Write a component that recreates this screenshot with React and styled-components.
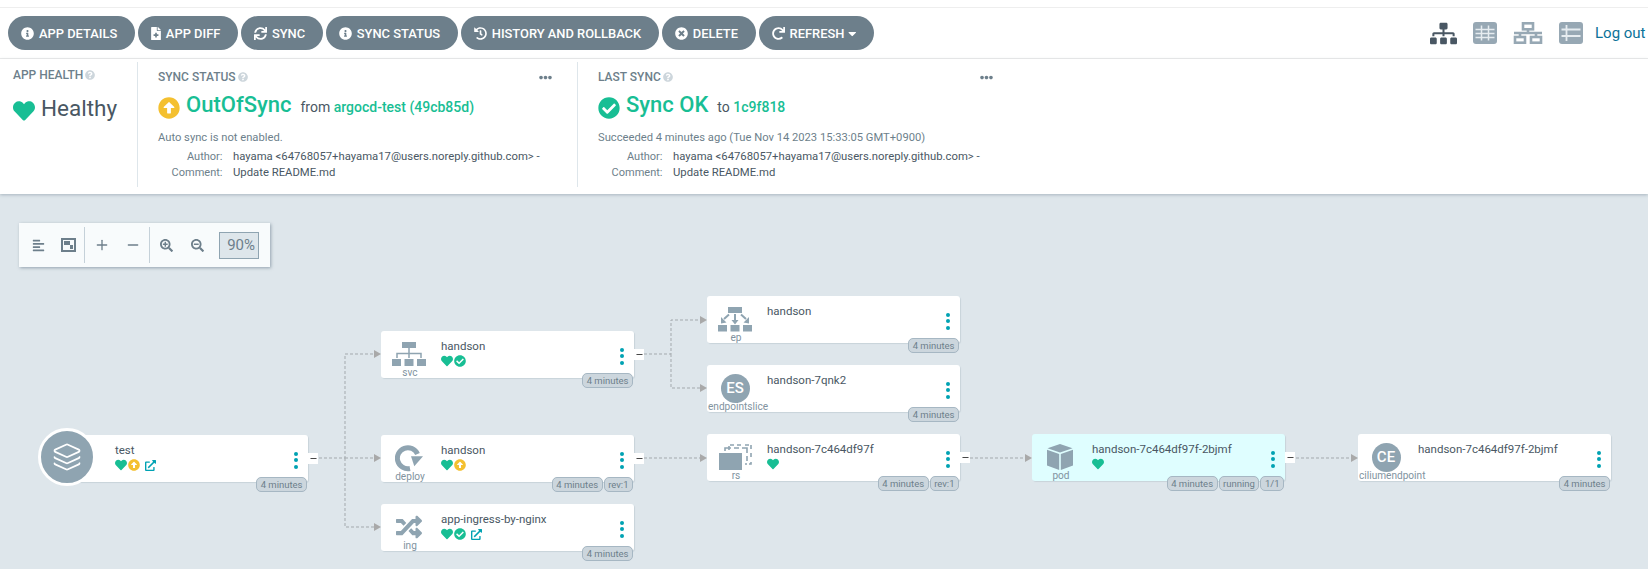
import React from 'react';
import styled, { createGlobalStyle } from 'styled-components';
import {
  FaInfoCircle,
  FaFileMedical,
  FaSync,
  FaHistory,
  FaTimesCircle,
  FaRedo,
  FaCaretDown,
  FaHeart,
  FaArrowAltCircleUp,
  FaCheckCircle,
  FaQuestionCircle,
  FaEllipsisH,
  FaExternalLinkAlt,
  FaAlignLeft,
  FaSearchPlus,
  FaSearchMinus,
  FaSitemap,
  FaRandom
} from 'react-icons/fa';
import { Layers, Plus, Minus } from 'lucide-react';

const GREEN = '#18be94';
const YELLOW = '#f4c030';
const CYAN = '#00a2b3';
const SLATE = '#8fa4b1';

const GlobalStyle = createGlobalStyle`
  html, body {
    margin: 0;
    height: 100%;
    overflow: hidden;
    background: #fff;
    font-family: Roboto, "Liberation Sans", sans-serif;
  }
  #root { height: 100%; }
`;

const Page = styled.div`
  height: 100%;
  display: flex;
  flex-direction: column;
  padding-top: 7px;
  box-sizing: border-box;
`;

const TopBar = styled.div`
  height: 50px;
  flex: none;
  border-top: 1px solid #eee;
  border-bottom: 1px solid #eee;
  display: flex;
  align-items: center;
  padding-left: 8px;
  gap: 2.6px;
`;

const ActionButton = styled.button`
  height: 34px;
  border: 0;
  border-radius: 17px;
  background: #6d7f8b;
  color: #fff;
  font-family: inherit;
  font-size: 12.9px;
  font-weight: 500;
  display: flex;
  align-items: center;
  gap: 5px;
  padding: 0 18px 0 13px;
  white-space: nowrap;
  svg {
    font-size: 13px;
    flex: none;
  }
`;

const FileIcon = styled(FaFileMedical)`
  && { width: 10px; }
`;

const Caret = styled(FaCaretDown)`
  && {
    width: 8.5px;
    margin-left: -1.5px;
  }
`;

const ViewSwitch = styled.div`
  margin-left: auto;
  display: flex;
  align-items: center;
  gap: 16px;
  color: #97a8b4;
`;

const ViewIcon = styled.svg`
  width: ${p => p.$w || 24}px;
  height: 22px;
`;

const LogOut = styled.a`
  color: #0b7299;
  font-size: 15px;
  white-space: nowrap;
  margin-left: -4px;
  width: 53px;
`;

const StatusPanel = styled.div`
  flex: none;
  height: 135px;
  padding: 3px 0 7px;
  box-sizing: border-box;
  display: flex;
  background: #fff;
  box-shadow: 0 1px 3px rgba(90, 110, 125, 0.4);
  position: relative;
  z-index: 1;
`;

const HealthColumn = styled.div`
  width: 138px;
  padding: 6px 0 0 13px;
  box-sizing: border-box;
  border-right: 1px solid #dee6eb;
`;

const SyncColumn = styled.div`
  width: 440px;
  padding: 8px 25px 0 20px;
  box-sizing: border-box;
  border-right: 1px solid #dee6eb;
`;

const LastSyncColumn = styled(SyncColumn)`
  border-right: 0;
`;

const HeadRow = styled.div`
  display: flex;
  justify-content: space-between;
  align-items: center;
  height: 14px;
  color: #6d7f8b;
  svg { display: block; }
`;

const Head = styled.div`
  font-size: 12px;
  font-weight: 500;
  color: #6d7f8b;
  display: flex;
  align-items: center;
  gap: 2px;
  height: 14px;
  svg { color: #cdd6dc; font-size: 10px; }
`;

const BigRow = styled.div`
  display: flex;
  align-items: baseline;
  margin-top: ${p => p.$top || 8}px;
  height: 32px;
  svg { align-self: center; flex: none; }
`;

const BigGreen = styled.span`
  font-size: 22px;
  font-weight: 500;
  color: ${GREEN};
  margin: 0 9px 0 6px;
  white-space: nowrap;
`;

const Healthy = styled.span`
  font-size: 22.5px;
  color: #495763;
  margin-left: 6px;
`;

const Small = styled.span`
  font-size: 14px;
  color: #495763;
  white-space: nowrap;
`;

const Revision = styled.span`
  color: ${GREEN};
  font-weight: 500;
`;

const Note = styled.div`
  font-size: 11.2px;
  color: #6d7f8b;
  margin-top: 5px;
  height: 20px;
  line-height: 18px;
  white-space: nowrap;
`;

const MetaRow = styled.div`
  display: grid;
  grid-template-columns: 64.5px auto;
  column-gap: 10.5px;
  font-size: 11.3px;
  line-height: 16px;
  white-space: nowrap;
  color: #495763;
  span:first-child {
    text-align: right;
    color: #6d7f8b;
    font-size: 11px;
  }
`;

const Canvas = styled.div`
  flex: 1;
  background: #dee6eb;
  position: relative;
  overflow: hidden;
`;

const ZoomBar = styled.div`
  position: absolute;
  left: 19px;
  top: 29px;
  width: 251px;
  height: 44px;
  box-sizing: border-box;
  background: #f8fbfc;
  box-shadow: 1px 1px 3px rgba(90, 110, 125, 0.55);
  display: flex;
  align-items: center;
  color: #6d7f8b;
  padding-left: 4px;
`;

const ZoomButton = styled.div`
  width: ${p => p.$w || 31}px;
  display: flex;
  justify-content: center;
  font-size: 13px;
`;

const ZoomSep = styled.div`
  width: 1px;
  height: 36px;
  background: #c5d1d9;
  margin: 0 1px;
`;

const ZoomInput = styled.div`
  width: 40px;
  height: 27px;
  box-sizing: border-box;
  border: 1px solid #8fa4b1;
  background: #dee6eb;
  margin-left: 6px;
  font-size: 15px;
  line-height: 25px;
  text-align: right;
  padding-right: 3px;
`;

const EdgeLayer = styled.svg`
  position: absolute;
  inset: 0;
  width: 100%;
  height: 100%;
`;

const Card = styled.div`
  position: absolute;
  left: ${p => p.$x}px;
  top: ${p => p.$y}px;
  width: 253px;
  height: 47px;
  border-radius: 3px;
  background: ${p => (p.$pod ? '#dffeff' : '#fff')};
  box-shadow: 1px 1px 1px #c8d3da;
  display: flex;
`;

const KindCol = styled.div`
  width: 60px;
  flex: none;
  position: relative;
  color: ${SLATE};
`;

const KindIcon = styled.div`
  position: absolute;
  left: 0;
  top: 9px;
  width: 56px;
  height: 28px;
  display: flex;
  justify-content: center;
  align-items: center;
`;

const KindLabel = styled.div`
  position: absolute;
  left: 1px;
  top: 35px;
  min-width: 56px;
  text-align: center;
  font-size: 10.1px;
  line-height: 14px;
  color: #8193a0;
  white-space: nowrap;
`;

const Badge = styled.div`
  width: 29px;
  height: 29px;
  border-radius: 50%;
  background: ${SLATE};
  color: #fff;
  font-size: 15px;
  font-weight: 500;
  display: flex;
  align-items: center;
  justify-content: center;
`;

const RootCircle = styled.div`
  position: absolute;
  left: -17px;
  top: -7px;
  width: 52px;
  height: 52px;
  border-radius: 50%;
  background: ${SLATE};
  border: 3px solid #fff;
  color: #fff;
  display: flex;
  align-items: center;
  justify-content: center;
`;

const Info = styled.div`
  flex: 1;
  padding-top: 7px;
  min-width: 0;
`;

const Name = styled.div`
  font-size: 11.5px;
  line-height: 16px;
  color: #495763;
  white-space: nowrap;
`;

const StatusRow = styled.div`
  display: flex;
  align-items: center;
  gap: 1px;
  height: 14px;
`;

const LinkIcon = styled(FaExternalLinkAlt)`
  color: ${CYAN};
  margin-left: 4px;
  font-size: 11px;
`;

const Kebab = styled.div`
  position: absolute;
  right: 10px;
  top: 17px;
  display: flex;
  flex-direction: column;
  gap: 2.4px;
  i {
    width: 4px;
    height: 4px;
    border-radius: 50%;
    background: ${CYAN};
    display: block;
  }
`;

const Expander = styled.div`
  position: absolute;
  left: 100%;
  top: 18px;
  width: 10px;
  height: 11px;
  background: #fff;
  color: #333;
  display: flex;
  align-items: center;
  justify-content: center;
`;

const Tags = styled.div`
  position: absolute;
  right: 1px;
  top: 42px;
  display: flex;
  gap: 1px;
`;

const Tag = styled.span`
  height: 15px;
  box-sizing: border-box;
  border: 1px solid #a6b7c3;
  border-radius: 5px;
  background: #ccd6dd;
  color: #6d7f8b;
  font-size: 9.5px;
  line-height: 13px;
  padding: 0 3.5px;
  white-space: nowrap;
`;

const SvcIcon = () => (
  <svg width="34" height="25" viewBox="0 0 34 25" fill={SLATE}>
    <rect x="10" y="0" width="14" height="6" />
    <path d="M16.25 6h1.500v4.750h12v5.250h-1.500v-3.750h-10.500v3.750h-1.500v-3.750h-10.500v3.750h-1.500v-5.250h12z" />
    <rect x="0" y="17" width="9" height="7" />
    <rect x="12.5" y="17" width="9" height="7" />
    <rect x="25" y="17" width="9" height="7" />
  </svg>
);

const EpIcon = () => (
  <svg width="34" height="25" viewBox="0 0 34 25" fill={SLATE}>
    <rect x="10" y="0" width="14" height="6" />
    <path d="M17 7v7M11 7.500l-5 4.500M23 7.500l5 4.500" stroke={SLATE} strokeWidth="2" fill="none" />
    <path d="M13.500 13h7L17 17.500zM3 10l5.500 5.500L3 16.500zM31 10l-5.500 5.500L31 16.500z" />
    <rect x="0" y="18" width="9" height="6.500" />
    <rect x="12.500" y="18" width="9" height="6.500" />
    <rect x="25" y="18" width="9" height="6.500" />
  </svg>
);

const RsIcon = () => (
  <svg width="33" height="26" viewBox="0 0 33 26" fill={SLATE}>
    <rect x="0" y="9" width="23" height="17" />
    <path
      d="M10 6V1h5M18 1h5M26 1h6v5M32 9v6M32 18v2h-6"
      fill="none"
      stroke={SLATE}
      strokeWidth="1.6"
      strokeDasharray="4 2"
    />
    <path d="M6 7V4h6M15 4h5M23 4h5v5M28 12v5" fill="none" stroke={SLATE} strokeWidth="1.6" />
  </svg>
);

const PodIcon = () => (
  <svg width="26" height="26" viewBox="0 0 26 26" fill={SLATE}>
    <path d="M13 0l12.500 4.200L13 8.500.5 4.200z" />
    <path d="M0 5.800l12.200 4.200V26L0 21.500z" />
    <path d="M26 5.800l-12.200 4.200V26L26 21.500z" />
  </svg>
);

const DeployIcon = () => (
  <svg width="29" height="27" viewBox="0 0 29 27">
    <path d="M15 23.500A10.500 10.500 0 1 1 22.500 9" fill="none" stroke={SLATE} strokeWidth="5" />
    <path d="M16 11.300h12L19.300 21.300z" fill={SLATE} />
  </svg>
);

const OutOfSync = ({ size = 12 }) => <FaArrowAltCircleUp color={YELLOW} size={size} />;
const Synced = ({ size = 12 }) => <FaCheckCircle color={GREEN} size={size} />;
const Heart = ({ size = 12 }) => <FaHeart color={GREEN} size={size} />;

const actions = [
  { label: 'APP DETAILS', icon: <FaInfoCircle /> },
  { label: 'APP DIFF', icon: <FileIcon /> },
  { label: 'SYNC', icon: <FaSync /> },
  { label: 'SYNC STATUS', icon: <FaInfoCircle /> },
  { label: 'HISTORY AND ROLLBACK', icon: <FaHistory /> },
  { label: 'DELETE', icon: <FaTimesCircle /> },
  { label: 'REFRESH', icon: <FaRedo />, caret: true }
];

// graph positions are relative to the canvas
const nodes = [
  { id: 'root', x: 55, y: 241, name: 'test', root: true, status: ['heart', 'out', 'link'], tags: ['4 minutes'], open: true },
  { id: 'svc', x: 381, y: 137, name: 'handson', kind: 'svc', icon: <SvcIcon />, status: ['heart', 'ok'], tags: ['4 minutes'], open: true },
  { id: 'deploy', x: 381, y: 241, name: 'handson', kind: 'deploy', icon: <DeployIcon />, status: ['heart', 'out'], tags: ['4 minutes', 'rev:1'], open: true },
  { id: 'ing', x: 381, y: 310, name: 'app-ingress-by-nginx', kind: 'ing', icon: <FaRandom size={26} />, status: ['heart', 'ok', 'link'], tags: ['4 minutes'] },
  { id: 'ep', x: 707, y: 102, name: 'handson', kind: 'ep', icon: <EpIcon />, status: [], tags: ['4 minutes'] },
  { id: 'es', x: 707, y: 171, name: 'handson-7qnk2', kind: 'endpointslice', icon: <Badge>ES</Badge>, status: [], tags: ['4 minutes'] },
  { id: 'rs', x: 707, y: 240, name: 'handson-7c464df97f', kind: 'rs', icon: <RsIcon />, status: ['heart'], tags: ['4 minutes', 'rev:1'], open: true },
  { id: 'pod', x: 1032, y: 240, name: 'handson-7c464df97f-2bjmf', kind: 'pod', icon: <PodIcon />, status: ['heart'], tags: ['4 minutes', 'running', '1/1'], open: true, pod: true },
  { id: 'ce', x: 1358, y: 240, name: 'handson-7c464df97f-2bjmf', kind: 'ciliumendpoint', icon: <Badge>CE</Badge>, status: [], tags: ['4 minutes'] }
];

const edges = [
  'M319 264H345V160H374',
  'M345 264H374',
  'M345 264V333H374',
  'M644 160H671V126H700',
  'M671 160V194H700',
  'M644 264H700',
  'M970 264H1025',
  'M1296 264H1351'
];

const statusIcon = type => {
  if (type === 'heart') return <Heart key={type} />;
  if (type === 'out') return <OutOfSync key={type} />;
  if (type === 'ok') return <Synced key={type} />;
  return <LinkIcon key={type} />;
};

const GraphNode = ({ node }) => (
  <Card $x={node.x} $y={node.y} $pod={node.pod}>
    <KindCol>
      {node.root ? (
        <RootCircle>
          <Layers size={30} strokeWidth={1.4} />
        </RootCircle>
      ) : (
        <>
          <KindIcon>{node.icon}</KindIcon>
          <KindLabel>{node.kind}</KindLabel>
        </>
      )}
    </KindCol>
    <Info>
      <Name>{node.name}</Name>
      <StatusRow>{node.status.map(statusIcon)}</StatusRow>
    </Info>
    <Kebab>
      <i />
      <i />
      <i />
    </Kebab>
    {node.open && (
      <Expander>
        <Minus size={9} strokeWidth={2.4} />
      </Expander>
    )}
    <Tags>
      {node.tags.map(tag => (
        <Tag key={tag}>{tag}</Tag>
      ))}
    </Tags>
  </Card>
);

const Meta = () => (
  <>
    <MetaRow>
      <span>Author:</span>
      <span>{'hayama <64768057+hayama17@users.noreply.github.com> -'}</span>
    </MetaRow>
    <MetaRow>
      <span>Comment:</span>
      <span>Update README.md</span>
    </MetaRow>
  </>
);

export default function App() {
  return (
    <Page>
      <GlobalStyle />
      <TopBar>
        {actions.map(a => (
          <ActionButton key={a.label}>
            {a.icon}
            {a.label}
            {a.caret && <Caret />}
          </ActionButton>
        ))}
        <ViewSwitch>
          <FaSitemap size={27} color="#495763" />
          <ViewIcon viewBox="0 0 24 22">
            <rect x="0" y="0" width="24" height="22" rx="3" fill="currentColor" />
            <path d="M2.500 7.500h19M2.500 11.500h19M2.500 15.500h19M8.500 3.500v15M15.500 3.500v15" stroke="#e6ecf0" strokeWidth="1.500" />
          </ViewIcon>
          <ViewIcon viewBox="0 0 30 22" $w={30}>
            <g fill="none" stroke="currentColor" strokeWidth="2.600">
              <rect x="10" y="1.300" width="10" height="6" />
              <path d="M15 7v4M1 11h28" />
              <rect x="2" y="15" width="10" height="5.700" />
              <rect x="18" y="15" width="10" height="5.700" />
              <path d="M7 11v4M23 11v4" />
            </g>
          </ViewIcon>
          <ViewIcon viewBox="0 0 24 22">
            <rect x="0" y="0" width="24" height="22" rx="3" fill="currentColor" />
            <path d="M2.500 7.500h19M2.500 14h19M7.500 3v16" stroke="#e6ecf0" strokeWidth="1.800" />
          </ViewIcon>
          <LogOut>Log out</LogOut>
        </ViewSwitch>
      </TopBar>

      <StatusPanel>
        <HealthColumn>
          <Head>
            APP HEALTH <FaQuestionCircle />
          </Head>
          <BigRow $top={13}>
            <Heart size={22} />
            <Healthy>Healthy</Healthy>
          </BigRow>
        </HealthColumn>
        <SyncColumn>
          <HeadRow>
            <Head>
              SYNC STATUS <FaQuestionCircle />
            </Head>
            <FaEllipsisH size={13} />
          </HeadRow>
          <BigRow>
            <OutOfSync size={22} />
            <BigGreen>OutOfSync</BigGreen>
            <Small>
              from <Revision>argocd-test (49cb85d)</Revision>
            </Small>
          </BigRow>
          <Note>Auto sync is not enabled.</Note>
          <Meta />
        </SyncColumn>
        <LastSyncColumn>
          <HeadRow>
            <Head>
              LAST SYNC <FaQuestionCircle />
            </Head>
            <FaEllipsisH size={13} />
          </HeadRow>
          <BigRow>
            <Synced size={22} />
            <BigGreen>Sync OK</BigGreen>
            <Small>
              to <Revision>1c9f818</Revision>
            </Small>
          </BigRow>
          <Note>Succeeded 4 minutes ago (Tue Nov 14 2023 15:33:05 GMT+0900)</Note>
          <Meta />
        </LastSyncColumn>
      </StatusPanel>

      <Canvas>
        <EdgeLayer>
          <defs>
            <marker id="arrow" markerWidth="7" markerHeight="8" refX="0" refY="4" orient="auto" markerUnits="userSpaceOnUse">
              <path d="M0 0L7 4L0 8z" fill="#a9a9a9" />
            </marker>
          </defs>
          {edges.map(d => (
            <path key={d} d={d} fill="none" stroke="#a3a9ad" strokeWidth="1" strokeDasharray="3 2" markerEnd="url(#arrow)" />
          ))}
        </EdgeLayer>
        <ZoomBar>
          <ZoomButton $w={30}><FaAlignLeft /></ZoomButton>
          <ZoomButton $w={30}>
            <svg width="15" height="14" viewBox="0 0 15 14" fill="currentColor">
              <path d="M0 0h15v14H0zM2 2v10h11V2z" />
              <path d="M3 3h6v4H3zM9 7h3v4H9z" />
            </svg>
          </ZoomButton>
          <ZoomSep />
          <ZoomButton><Plus size={16} strokeWidth={2} /></ZoomButton>
          <ZoomButton><Minus size={16} strokeWidth={2} /></ZoomButton>
          <ZoomSep />
          <ZoomButton><FaSearchPlus /></ZoomButton>
          <ZoomButton><FaSearchMinus /></ZoomButton>
          <ZoomInput>90%</ZoomInput>
        </ZoomBar>
        {nodes.map(node => (
          <GraphNode key={node.id} node={node} />
        ))}
      </Canvas>
    </Page>
  );
}
